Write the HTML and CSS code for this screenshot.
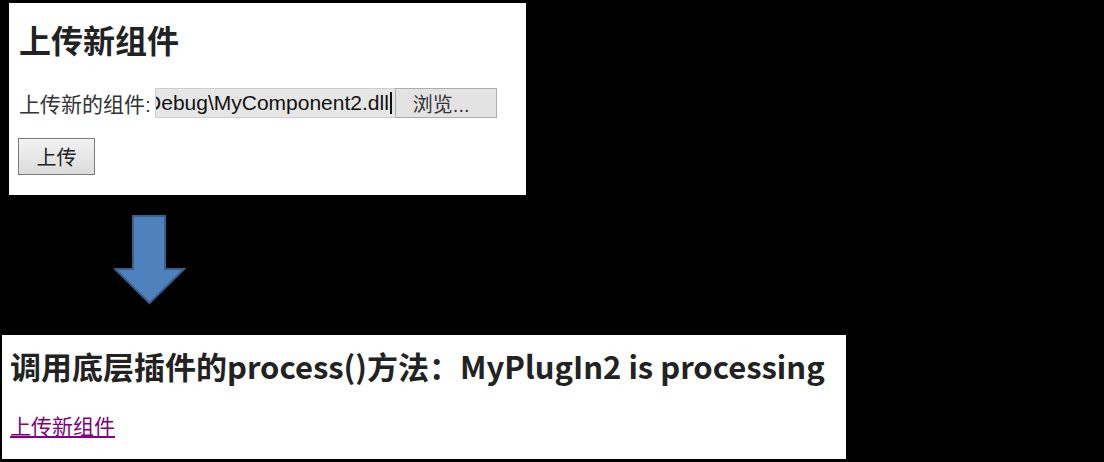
FILE: index.html
```html
<!DOCTYPE html>
<html lang="zh-CN">
<head>
  <meta charset="UTF-8">
  <title>上传新组件</title>
  <link rel="stylesheet" href="styles.css">
</head>
<body>

<div class="panel upload-panel">
  <h2 class="title">上传新组件</h2>
  <div class="file-row">
    <span class="label">上传新的组件:</span>
    <span class="file-box"><span class="file-name">Debug\MyComponent2.dll</span><span class="caret"></span></span>
    <button class="browse">浏览...</button>
  </div>
  <button class="submit">上传</button>
</div>

<div class="arrow-wrap">
  <svg class="arrow" width="72" height="92" viewBox="0 0 72 92">
    <polygon points="19,1 51,1 51,54 70,54 35.5,88 1,54 19,54" fill="#4f81bd" stroke="#3a5f8b" stroke-width="2"/>
  </svg>
</div>

<div class="panel result-panel">
  <h2 class="result-title">调用底层插件的process()方法：MyPlugIn2 is processing</h2>
  <a class="back-link" href="#">上传新组件</a>
</div>

</body>
</html>
```

FILE: styles.css
```css
body {
  margin: 0;
  background: #000;
  font-family: "Liberation Sans", "Noto Sans CJK SC", sans-serif;
  color: #222;
  height: 462px;
  overflow: hidden;
}

.panel {
  background: #fff;
  box-sizing: border-box;
}

.upload-panel {
  margin: 3px 0 0 9px;
  width: 517px;
  height: 192px;
  padding: 20px 0 0 10px;
}

.title {
  margin: 0;
  font-size: 32px;
  line-height: 38px;
  font-weight: bold;
  color: #222;
}

.file-row {
  display: flex;
  align-items: center;
  margin-top: 27px;
  height: 30px;
}

.label {
  font-size: 21px;
  margin-right: 4px;
  color: #333;
  white-space: nowrap;
}

.file-box {
  display: flex;
  justify-content: flex-end;
  align-items: center;
  overflow: hidden;
  width: 240px;
  height: 30px;
  box-sizing: border-box;
  background: #e6e6e6;
  border: 1px solid #cfcfcf;
  border-right: none;
  font-size: 21px;
  color: #111;
  flex-shrink: 0;
}

.file-name {
  white-space: nowrap;
  flex-shrink: 0;
}

.caret {
  width: 2px;
  height: 22px;
  background: #111;
  margin: 0 3px 0 1px;
  flex-shrink: 0;
}

.browse {
  width: 102px;
  height: 30px;
  margin: 0;
  background: #e3e3e3;
  border: 1px solid #adadad;
  font-family: "Liberation Sans", "Noto Sans CJK SC", sans-serif;
  font-size: 20px;
  color: #333;
  text-align: left;
  padding: 0 0 0 17px;
  flex-shrink: 0;
}

.submit {
  display: block;
  margin-top: 20px;
  margin-left: -1px;
  width: 77px;
  height: 37px;
  background: linear-gradient(#f2f2f2, #dcdcdc);
  border: 1px solid #7a7a7a;
  font-family: "Liberation Sans", "Noto Sans CJK SC", sans-serif;
  font-size: 20px;
  color: #222;
  padding: 0;
}

.arrow-wrap {
  height: 140px;
  padding: 20px 0 0 114px;
  box-sizing: border-box;
}

.arrow {
  display: block;
}

.result-panel {
  margin-left: 2px;
  width: 844px;
  height: 124px;
  padding: 8px 0 0 8px;
}

.result-title {
  margin: 0;
  font-family: "Noto Sans CJK SC", sans-serif;
  font-size: 31px;
  line-height: 46px;
  font-weight: bold;
  color: #222;
  white-space: nowrap;
}

.back-link {
  display: inline-block;
  margin-top: 24px;
  font-family: "Noto Sans CJK SC", sans-serif;
  font-size: 21px;
  line-height: 24px;
  color: #800080;
  text-decoration: underline;
}
```
